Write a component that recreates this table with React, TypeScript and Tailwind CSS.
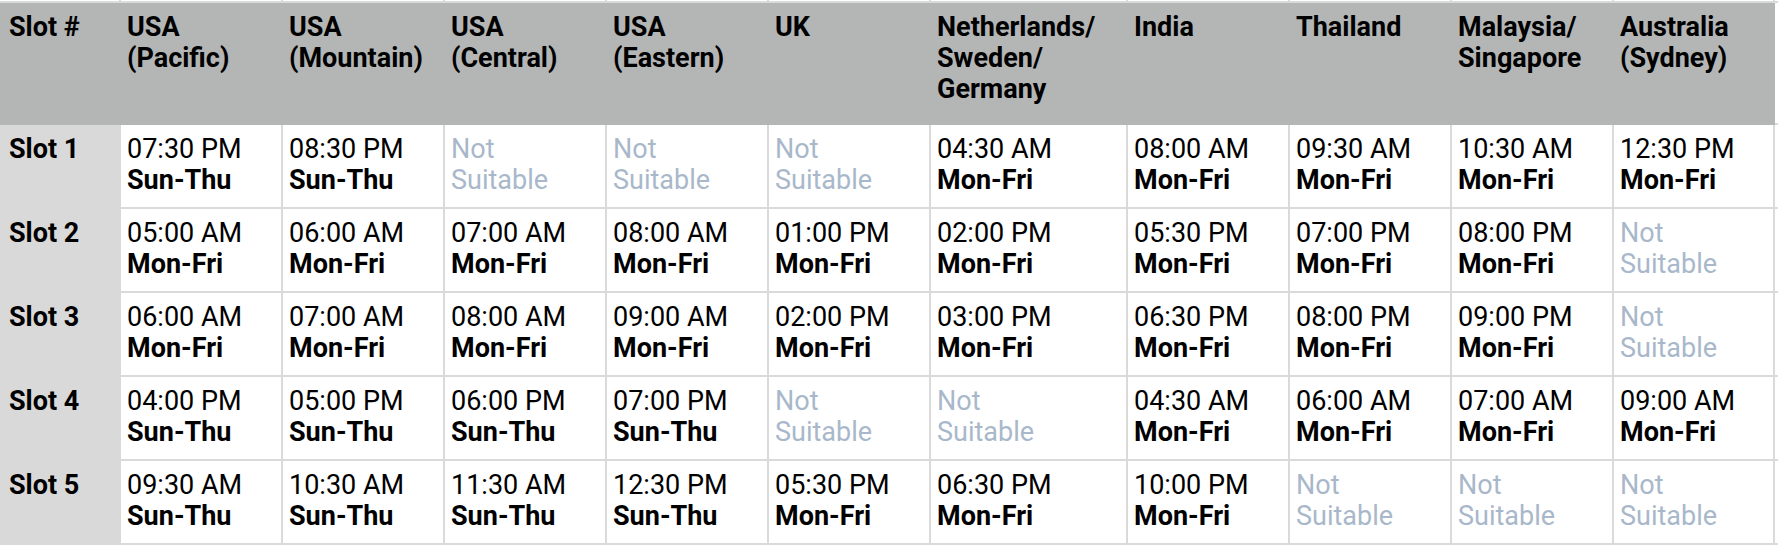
import React from "react";

// 時差表: スロット × 地域。空き時間は "Not Suitable" として薄色で出す
type Cell = { time: string; days: string } | null;

const HEADERS: string[][] = [
  ["Slot #"],
  ["USA", "(Pacific)"],
  ["USA", "(Mountain)"],
  ["USA", "(Central)"],
  ["USA", "(Eastern)"],
  ["UK"],
  ["Netherlands/", "Sweden/", "Germany"],
  ["India"],
  ["Thailand"],
  ["Malaysia/", "Singapore"],
  ["Australia", "(Sydney)"],
];

const MF = "Mon-Fri";
const ST = "Sun-Thu";
const c = (time: string, days: string): Cell => ({ time, days });

const ROWS: { slot: string; cells: Cell[] }[] = [
  {
    slot: "Slot 1",
    cells: [c("07:30 PM", ST), c("08:30 PM", ST), null, null, null, c("04:30 AM", MF), c("08:00 AM", MF), c("09:30 AM", MF), c("10:30 AM", MF), c("12:30 PM", MF)],
  },
  {
    slot: "Slot 2",
    cells: [c("05:00 AM", MF), c("06:00 AM", MF), c("07:00 AM", MF), c("08:00 AM", MF), c("01:00 PM", MF), c("02:00 PM", MF), c("05:30 PM", MF), c("07:00 PM", MF), c("08:00 PM", MF), null],
  },
  {
    slot: "Slot 3",
    cells: [c("06:00 AM", MF), c("07:00 AM", MF), c("08:00 AM", MF), c("09:00 AM", MF), c("02:00 PM", MF), c("03:00 PM", MF), c("06:30 PM", MF), c("08:00 PM", MF), c("09:00 PM", MF), null],
  },
  {
    slot: "Slot 4",
    cells: [c("04:00 PM", ST), c("05:00 PM", ST), c("06:00 PM", ST), c("07:00 PM", ST), null, null, c("04:30 AM", MF), c("06:00 AM", MF), c("07:00 AM", MF), c("09:00 AM", MF)],
  },
  {
    slot: "Slot 5",
    cells: [c("09:30 AM", ST), c("10:30 AM", ST), c("11:30 AM", ST), c("12:30 PM", ST), c("05:30 PM", MF), c("06:30 PM", MF), c("10:00 PM", MF), null, null, null],
  },
];

const GRID = "grid grid-cols-[121px_repeat(5,162px)_197px_repeat(3,162px)_161px_1fr]";
const LINE = "border-[#dadada]";

export default function App() {
  return (
    <div
      className="w-[1778px] h-[546px] overflow-hidden bg-white text-[27px] leading-[31px] text-black"
      style={{ fontFamily: "Roboto, 'Liberation Sans', sans-serif" }}
    >
      {/* 上の行の切れ端 */}
      <div className={GRID}>
        {Array.from({ length: 12 }).map((_, i) => (
          <div key={i} className={`h-[3px] border-b-2 ${i < 11 ? "border-r-2" : ""} ${LINE}`} />
        ))}
      </div>

      {/* 見出し */}
      <div className={GRID}>
        {HEADERS.map((lines, i) => (
          <div key={i} className={`h-[122px] bg-[#b4b6b5] pt-[9px] font-bold ${i === 0 ? "pl-[9px]" : "pl-[6px]"}`}>
            {lines.map((l) => (
              <div key={l}>{l}</div>
            ))}
          </div>
        ))}
        <div className={`border-b-2 ${LINE}`} />
      </div>

      {ROWS.map((row) => (
        <div key={row.slot} className={GRID}>
          <div className="h-[84px] bg-[#d9d9d9] pl-[9px] pt-[9px] font-bold">{row.slot}</div>
          {row.cells.map((cell, i) => (
            <div key={i} className={`h-[84px] border-r-2 border-b-2 ${LINE} pl-[6px] pt-[9px]`}>
              {cell ? (
                <>
                  <div>{cell.time}</div>
                  <div className="font-bold">{cell.days}</div>
                </>
              ) : (
                <div className="text-[#a8b8ca]">
                  <div>Not</div>
                  <div>Suitable</div>
                </div>
              )}
            </div>
          ))}
          <div className={`h-[84px] border-b-2 ${LINE}`} />
        </div>
      ))}
    </div>
  );
}
